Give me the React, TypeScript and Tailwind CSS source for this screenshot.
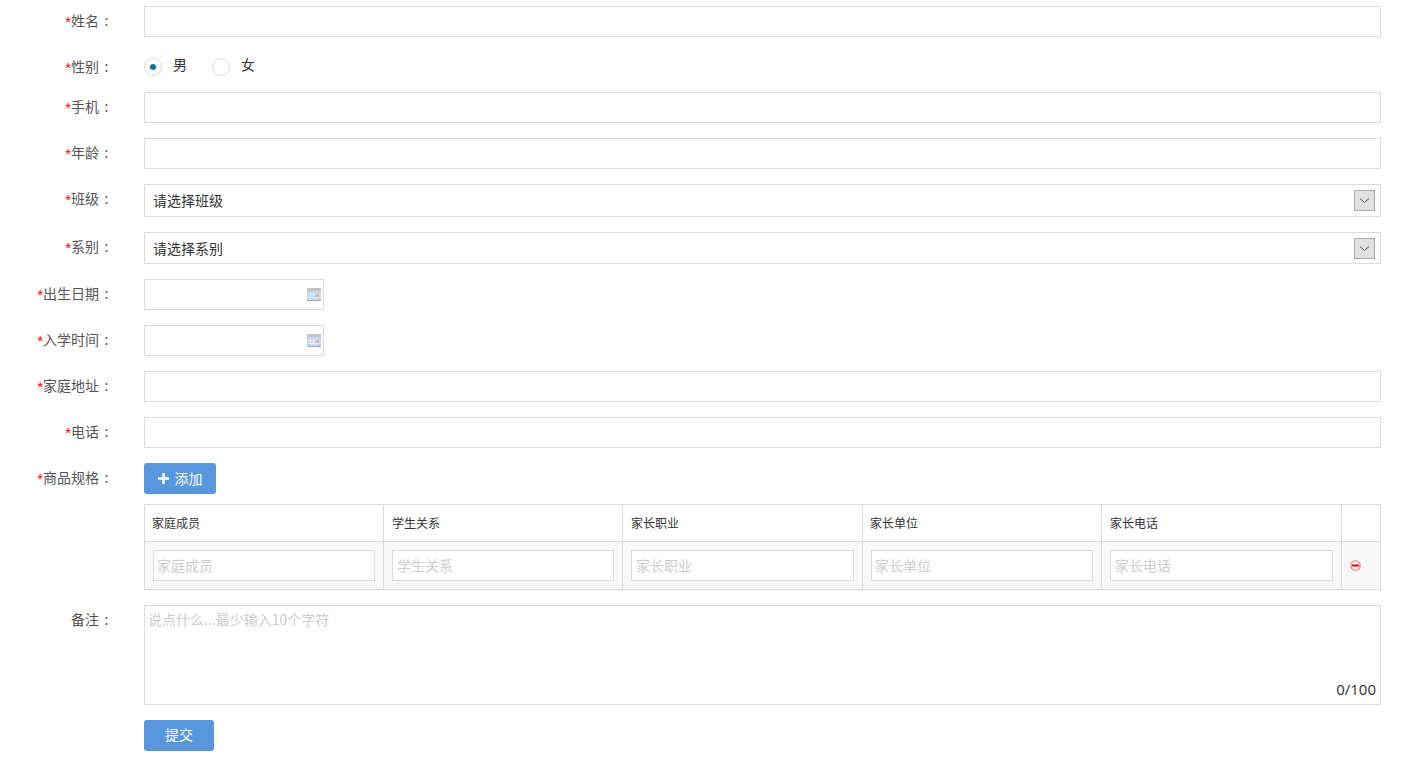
import React from "react";

function Label({ text, req = true }: { text: string; req?: boolean }) {
  return (
    <div className="w-[114px] shrink-0 mr-[30px] flex justify-end text-[14px] leading-[28px] text-[#555555] whitespace-nowrap">
      {req && <span className="relative top-[2px] text-[#ff0000] text-[15px] font-['Liberation_Sans',sans-serif]">*</span>}
      <span>{text}</span>
      <span className="w-[15px] text-center">:</span>
    </div>
  );
}

function TextBox() {
  return <div className="h-[31px] flex-1 border border-[#dcdcdc] bg-white" />;
}

function Row({ children, className = "" }: { children: React.ReactNode; className?: string }) {
  return <div className={`flex mb-[15px] ${className}`}>{children}</div>;
}

function Radio({ on }: { on?: boolean }) {
  return (
    <span className="w-[18px] h-[18px] rounded-full border border-[#dcdcdc] bg-white flex items-center justify-center">
      {on && <span className="w-[6px] h-[6px] rounded-full bg-[#0f73ab]" />}
    </span>
  );
}

function Select({ text, h, off }: { text: string; h: string; off: string }) {
  return (
    <div className={`${h} flex-1 border border-[#dcdcdc] bg-white flex items-center justify-between pl-[8px] pr-[5px]`}>
      <span className={`text-[14px] text-[#333333] relative ${off}`}>{text}</span>
      <span className="w-[21px] h-[21px] bg-[#e1e1e1] border border-[#aaaaaa] flex items-center justify-center">
        <svg width="11" height="7" viewBox="0 0 11 7" fill="none">
          <path d="M1 1.5 L5.5 5.5 L10 1.5" stroke="#555555" strokeWidth="1" />
        </svg>
      </span>
    </div>
  );
}

function Calendar() {
  return (
    <svg width="14" height="13" viewBox="0 0 14 13" className="absolute right-[2px] top-[8px]">
      <rect x="0" y="0" width="14" height="3" fill="#c4c4c4" />
      <rect x="0" y="3" width="14" height="10" fill="#bdd0ee" />
      <path d="M3.5 3.5V13M6.5 3.5V13M9.5 3.5V13M0 6.5H14M0 9.5H14" stroke="#e6eef9" strokeWidth="1" />
      <rect x="9" y="6" width="3" height="3" fill="#e8a8a0" />
      <rect x="0" y="12" width="14" height="1" fill="#98a9c2" />
    </svg>
  );
}

function DateBox() {
  return <div className="relative h-[31px] w-[180px] border border-[#dcdcdc] bg-white"><Calendar /></div>;
}

function Blue({ children, w }: { children: React.ReactNode; w: string }) {
  return (
    <div className={`${w} h-[31px] rounded-[3px] bg-[#5897de] text-white text-[14px] flex items-center justify-center`}>
      {children}
    </div>
  );
}

const cols = [
  { t: "家庭成员", head: "pl-[7px]", ph: "pl-[3px]" },
  { t: "学生关系", head: "pl-[8px]", ph: "pl-[4px]" },
  { t: "家长职业", head: "pl-[8px]", ph: "pl-[4px]" },
  { t: "家长单位", head: "pl-[7px]", ph: "pl-[3px]" },
  { t: "家长电话", head: "pl-[8px]", ph: "pl-[4px]" },
];
const gridCols = "grid-cols-[239px_239px_240px_239px_240px_39px]";

export default function App() {
  return (
    <div className="w-[1402px] h-[762px] overflow-hidden bg-white pt-[6px] pr-[21px] font-['Noto_Sans_CJK_SC','Noto_Sans',sans-serif]">
      <Row><Label text="姓名" /><TextBox /></Row>
      <Row className="h-[25px]">
        <Label text="性别" />
        <div className="flex items-center h-[30px] text-[14px] text-[#333333]">
          <Radio on />
          <span className="ml-[11px] w-[39px] relative top-[-3px]">男</span>
          <Radio />
          <span className="ml-[11px] relative top-[-3px]">女</span>
        </div>
      </Row>
      <Row><Label text="手机" /><TextBox /></Row>
      <Row><Label text="年龄" /><TextBox /></Row>
      <Row><Label text="班级" /><Select text="请选择班级" h="h-[33px]" off="top-[-0.5px]" /></Row>
      <Row><Label text="系别" /><Select text="请选择系别" h="h-[32px]" off="top-[0.5px]" /></Row>
      <Row><Label text="出生日期" /><DateBox /></Row>
      <Row><Label text="入学时间" /><DateBox /></Row>
      <Row><Label text="家庭地址" /><TextBox /></Row>
      <Row><Label text="电话" /><TextBox /></Row>
      <div className="flex mb-[10px]">
        <Label text="商品规格" />
        <Blue w="w-[72px]">
          <svg width="11" height="11" viewBox="0 0 11 11" className="mr-[6px]">
            <path d="M5.5 0V11M0 5.5H11" stroke="#ffffff" strokeWidth="2.5" />
          </svg>
          添加
        </Blue>
      </div>
      <div className="ml-[144px] mb-[15px] border border-[#dcdcdc] text-[12px]">
        <div className={`grid ${gridCols} h-[37px] border-b border-[#dcdcdc]`}>
          {cols.map((c) => (
            <div key={c.t} className={`border-r border-[#dcdcdc] ${c.head} flex items-center text-[#333333]`}>{c.t}</div>
          ))}
          <div />
        </div>
        <div className={`grid ${gridCols} h-[47px] bg-[#f8f8f8]`}>
          {cols.map((c) => (
            <div key={c.t} className="border-r border-[#dcdcdc] pl-[8px] pr-[8px] pt-[8px]">
              <div className={`h-[31px] border border-[#dcdcdc] bg-white ${c.ph} text-[14px] leading-[28px] text-[#cccccc] whitespace-nowrap`}>{c.t}</div>
            </div>
          ))}
          <div className="flex items-center pl-[8px]">
            <svg width="11" height="11" viewBox="0 0 11 11">
              <circle cx="5.5" cy="5.5" r="4.7" fill="#ffffff" stroke="#ff6b6b" strokeWidth="1.1" />
              <rect x="2" y="4.5" width="7" height="2" fill="#ee0000" />
            </svg>
          </div>
        </div>
      </div>
      <div className="flex mb-[15px]">
        <Label text="备注" req={false} />
        <div className="relative h-[100px] flex-1 border border-[#dcdcdc] bg-white pl-[3px] text-[14px] leading-[26px] text-[#cccccc]">
          说点什么...最少输入10个字符
          <span className="absolute right-[4px] bottom-[5px] text-[15px] leading-[20px] text-[#333333] font-['Open_Sans',sans-serif]">0/100</span>
        </div>
      </div>
      <div className="ml-[144px]"><Blue w="w-[70px]"><span className="relative top-[-1px]">提交</span></Blue></div>
    </div>
  );
}
